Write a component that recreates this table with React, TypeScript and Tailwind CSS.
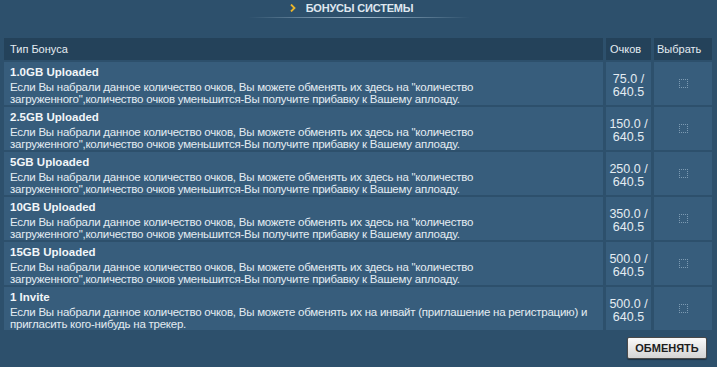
import React from "react";

const desc1 = [
  "Если Вы набрали данное количество очков, Вы можете обменять их здесь на \"количество",
  "загруженного\",количество очков уменьшится-Вы получите прибавку к Вашему аплоаду.",
];

const rows = [
  { title: "1.0GB Uploaded", lines: desc1, pts: "75.0 /" },
  { title: "2.5GB Uploaded", lines: desc1, pts: "150.0 /" },
  { title: "5GB Uploaded", lines: desc1, pts: "250.0 /" },
  { title: "10GB Uploaded", lines: desc1, pts: "350.0 /" },
  { title: "15GB Uploaded", lines: desc1, pts: "500.0 /" },
  {
    title: "1 Invite",
    lines: [
      "Если Вы набрали данное количество очков, Вы можете обменять их на инвайт (приглашение на регистрацию) и",
      "пригласить кого-нибудь на трекер.",
    ],
    pts: "500.0 /",
  },
];

export default function App() {
  return (
    <div className="w-[717px] h-[367px] bg-[#2d506c] font-['Liberation_Sans',Arial,sans-serif] text-[#e4ecf2] overflow-hidden">
      <div className="flex flex-col items-center pt-[1px]">
        <div className="flex items-center h-[14px] mr-[14px]">
          <svg width="6" height="8" viewBox="0 0 6 8" className="mr-[10px]">
            <polyline points="1,0.5 4.5,4 1,7.5" fill="none" stroke="#e9b52a" strokeWidth="1.8" />
          </svg>
          <span className="text-[11px] font-bold text-[#dfe7ef] tracking-[-0.2px]">БОНУСЫ СИСТЕМЫ</span>
        </div>
        <div className="w-[222px] h-px mt-[2px] bg-gradient-to-r from-transparent via-[#9fb9cc] to-transparent" />
      </div>

      <div className="grid grid-cols-[599px_45px_58px] gap-x-[3px] gap-y-[2px] ml-[4px] mt-[20px]">
        <div className="h-[22px] bg-[#24425a] pl-[6px] text-[11px] leading-[22px]">Тип Бонуса</div>
        <div className="h-[22px] bg-[#24425a] pl-[4px] text-[11px] leading-[22px]">Очков</div>
        <div className="h-[22px] bg-[#24425a] pl-[3px] text-[11px] leading-[22px]">Выбрать</div>

        {rows.map((r, i) => (
          <React.Fragment key={i}>
            <div className="h-[43px] bg-[#375d7c] pl-[6px] pt-[2px]">
              <div className="text-[11.5px] font-bold leading-[17px] text-[#f2f6f9]">{r.title}</div>
              {r.lines.map((l, j) => (
                <div key={j} className="text-[11.5px] leading-[12px] whitespace-nowrap tracking-[-0.24px]">
                  {l}
                </div>
              ))}
            </div>
            <div className="h-[43px] bg-[#375d7c] pt-[11px] text-center text-[12.5px] leading-[13px]">
              <div>{r.pts}</div>
              <div>640.5</div>
            </div>
            <div className="h-[43px] bg-[#375d7c] flex items-center justify-center">
              <div className="w-[9px] h-[9px] border border-dotted border-[#7d9bb3]" />
            </div>
          </React.Fragment>
        ))}
      </div>

      <div className="flex justify-end pr-[10px] mt-[7px]">
        <button className="w-[80px] h-[22px] rounded-[2px] border border-[#4a4a4a] bg-gradient-to-b from-[#fafafa] to-[#d4d4d4] text-[11px] font-bold text-[#1e1e1e] shadow-[0_1px_1px_rgba(0,0,0,0.4)]">
          ОБМЕНЯТЬ
        </button>
      </div>
    </div>
  );
}
